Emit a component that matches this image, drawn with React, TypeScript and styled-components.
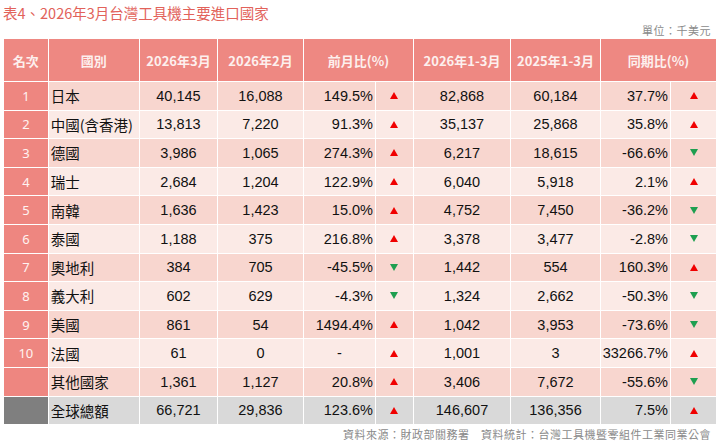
import React from "react";
import styled, { createGlobalStyle } from "styled-components";

const Global = createGlobalStyle`
  html, body { margin: 0; padding: 0; background: #fff; }
  body { font-family: "Noto Sans CJK TC", "Noto Sans", sans-serif; }
`;

const Page = styled.div`
  width: 716px;
  height: 445px;
  overflow: hidden;
  display: flex;
  flex-direction: column;
`;

const Title = styled.div`
  margin: 3px 0 0 3px;
  height: 20px;
  line-height: 20px;
  font-size: 14.5px;
  color: #e2625a;
  font-family: "Noto Sans CJK TC", sans-serif;
`;

const Note = styled.div`
  height: 14px;
  line-height: 14px;
  font-size: 11px;
  letter-spacing: 0.5px;
  color: #8a8a8a;
  text-align: right;
  padding-right: 5px;
  font-family: "Noto Sans CJK TC", sans-serif;
`;

const Unit = styled(Note)`
  margin-top: 0px;
  margin-bottom: 2px;
`;

const Source = styled(Note)`
  margin-top: 2px;
`;

const Table = styled.table`
  margin-left: 3px;
  width: 713px;
  table-layout: fixed;
  border-collapse: collapse;
`;

const Th = styled.th`
  height: 42px;
  padding: 0;
  background: #ee8882;
  color: #fdf0ee;
  font-weight: 700;
  font-size: 13px;
  text-align: center;
  border: 1px solid #fff;
  border-top: none;
  font-family: "Noto Sans CJK TC", sans-serif;
`;

type Tone = "dark" | "light" | "total";

const rowBg: Record<Tone, string> = {
  dark: "#f8d6cf",
  light: "#fbeae6",
  total: "#d9d9d9",
};

const Tr = styled.tr<{ $tone: Tone }>`
  height: 28.6px;
  background: ${(p) => rowBg[p.$tone]};
`;

const Td = styled.td<{ $align?: "left" | "center" | "right" }>`
  padding: 0 ${(p) => (p.$align === "right" ? "2px" : "0")} 0
    ${(p) => (p.$align === "left" ? "2px" : "0")};
  border: 1px solid #fff;
  text-align: ${(p) => p.$align || "center"};
  font-size: 14.5px;
  color: #111;
  font-family: "Liberation Sans", "Noto Sans CJK TC", sans-serif;
  white-space: nowrap;
  overflow: visible;
`;

const RankTd = styled.td<{ $total?: boolean }>`
  padding: 0;
  border: 1px solid #fff;
  text-align: center;
  background: ${(p) => (p.$total ? "#7f7f7f" : "#ee8680")};
  color: #fff3f1;
  font-size: 13px;
  font-family: "Noto Sans", sans-serif;
`;

const NameTd = styled(Td)`
  font-family: "Noto Sans CJK TC", sans-serif;
  font-size: 14.5px;
  padding-left: 2px;
`;

const ArrowTd = styled.td`
  padding: 0;
  border: 1px solid #fff;
  text-align: center;
  line-height: 0;
`;

const Arrow: React.FC<{ dir: "up" | "down" }> = ({ dir }) => (
  <svg width="8" height="7" viewBox="0 0 8 7" style={{ display: "inline-block" }}>
    {dir === "up" ? (
      <polygon points="4,0 8,7 0,7" fill="#f00000" />
    ) : (
      <polygon points="0,0 8,0 4,7" fill="#1e9f50" />
    )}
  </svg>
);

type Row = [string, string, string, string, string, "up" | "down", string, string, string, "up" | "down"];

const rows: Row[] = [
  ["1", "日本", "40,145", "16,088", "149.5%", "up", "82,868", "60,184", "37.7%", "up"],
  ["2", "中國(含香港)", "13,813", "7,220", "91.3%", "up", "35,137", "25,868", "35.8%", "up"],
  ["3", "德國", "3,986", "1,065", "274.3%", "up", "6,217", "18,615", "-66.6%", "down"],
  ["4", "瑞士", "2,684", "1,204", "122.9%", "up", "6,040", "5,918", "2.1%", "up"],
  ["5", "南韓", "1,636", "1,423", "15.0%", "up", "4,752", "7,450", "-36.2%", "down"],
  ["6", "泰國", "1,188", "375", "216.8%", "up", "3,378", "3,477", "-2.8%", "down"],
  ["7", "奧地利", "384", "705", "-45.5%", "down", "1,442", "554", "160.3%", "up"],
  ["8", "義大利", "602", "629", "-4.3%", "down", "1,324", "2,662", "-50.3%", "down"],
  ["9", "美國", "861", "54", "1494.4%", "up", "1,042", "3,953", "-73.6%", "down"],
  ["10", "法國", "61", "0", "-", "up", "1,001", "3", "33266.7%", "up"],
  ["", "其他國家", "1,361", "1,127", "20.8%", "up", "3,406", "7,672", "-55.6%", "down"],
  ["", "全球總額", "66,721", "29,836", "123.6%", "up", "146,607", "136,356", "7.5%", "up"],
];

const widths = [44.7, 91.3, 78, 86, 72, 38, 97, 90, 70, 46];

export default function App() {
  return (
    <Page>
      <Global />
      <Title>表4、2026年3月台灣工具機主要進口國家</Title>
      <Unit>單位：千美元</Unit>
      <Table>
        <colgroup>
          {widths.map((w, i) => (
            <col key={i} style={{ width: `${w}px` }} />
          ))}
        </colgroup>
        <thead>
          <tr>
            <Th>名次</Th>
            <Th>國別</Th>
            <Th>2026年3月</Th>
            <Th>2026年2月</Th>
            <Th colSpan={2}>前月比(%)</Th>
            <Th>2026年1-3月</Th>
            <Th>2025年1-3月</Th>
            <Th colSpan={2}>同期比(%)</Th>
          </tr>
        </thead>
        <tbody>
          {rows.map((r, i) => {
            const total = i === rows.length - 1;
            const tone: Tone = total ? "total" : i % 2 === 0 ? "dark" : "light";
            return (
              <Tr key={i} $tone={tone}>
                <RankTd $total={total}>{r[0]}</RankTd>
                <NameTd $align="left">{r[1]}</NameTd>
                <Td>{r[2]}</Td>
                <Td>{r[3]}</Td>
                <Td $align={r[4] === "-" ? "center" : "right"}>{r[4]}</Td>
                <ArrowTd>
                  <Arrow dir={r[5]} />
                </ArrowTd>
                <Td>{r[6]}</Td>
                <Td>{r[7]}</Td>
                <Td $align="right">{r[8]}</Td>
                <ArrowTd>
                  <Arrow dir={r[9]} />
                </ArrowTd>
              </Tr>
            );
          })}
        </tbody>
      </Table>
      <Source>資料來源：財政部關務署　資料統計：台灣工具機暨零組件工業同業公會</Source>
    </Page>
  );
}
